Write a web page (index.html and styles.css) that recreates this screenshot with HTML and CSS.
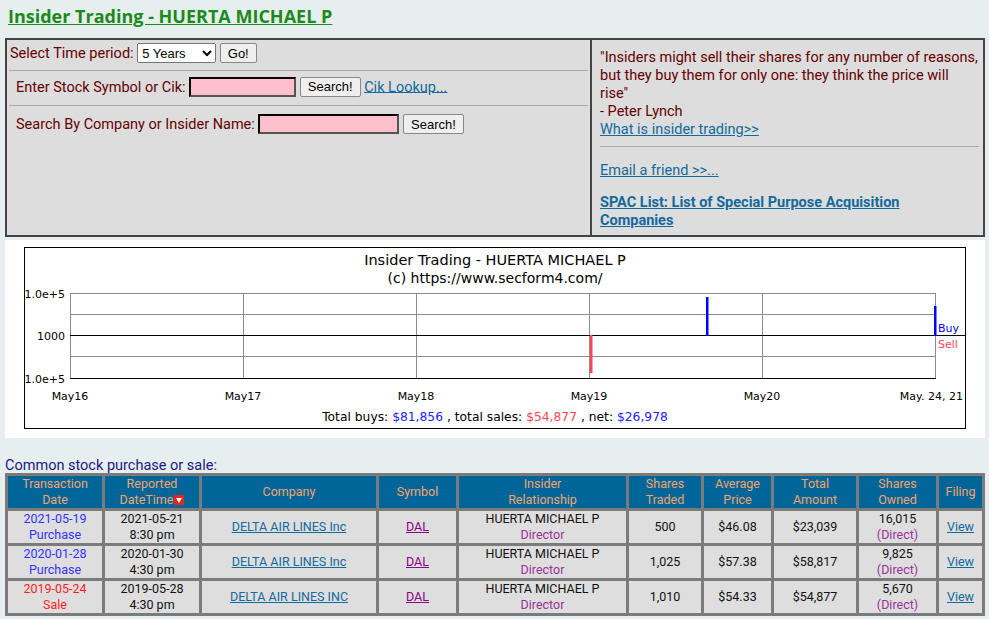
FILE: index.html
```html
<!DOCTYPE html>
<html lang="en">
<head>
    <meta charset="UTF-8">
    <title>Insider Trading - HUERTA MICHAEL P</title>
    <link rel="stylesheet" href="styles.css">
</head>
<body>

    <h1><a href="#" class="title-link">Insider Trading - HUERTA MICHAEL P</a></h1>

    <table class="top-panel">
        <tr>
            <td class="search-cell">
                <form class="search-row first">
                    Select Time period:
                    <select>
                        <option>5 Years</option>
                        <option>1 Year</option>
                        <option>All</option>
                    </select>
                    <button type="button">Go!</button>
                </form>
                <hr>
                <form class="search-row">
                    Enter Stock Symbol or Cik:
                    <input type="text" class="pink-input short">
                    <button type="button">Search!</button>
                    <a href="#">Cik Lookup...</a>
                </form>
                <hr>
                <form class="search-row third">
                    Search By Company or Insider Name:
                    <input type="text" class="pink-input long">
                    <button type="button">Search!</button>
                </form>
            </td>
            <td class="quote-cell">
                <div class="quote">"Insiders might sell their shares for any number of reasons, but they buy them for only one: they think the price will<br>rise"<br>- Peter Lynch</div>
                <a href="#">What is insider trading&gt;&gt;</a>
                <hr>
                <p><a href="#">Email a friend &gt;&gt;...</a></p>
                <p class="spac-line"><a href="#" class="spac">SPAC List: List of Special Purpose Acquisition Companies</a></p>
            </td>
        </tr>
    </table>

    <div class="chart-box">
        <svg class="chart" width="942" height="182" viewBox="0 0 942 182">
            <rect x="0.5" y="0.5" width="941" height="181" fill="#fff" stroke="#000"/>
            <text x="471" y="18" class="c-title">Insider Trading - HUERTA MICHAEL P</text>
            <text x="471" y="36" class="c-sub">(c) https://www.secform4.com/</text>

            <!-- grid -->
            <g stroke="#8c8c8c" stroke-width="1">
                <line x1="46" y1="46.5" x2="911" y2="46.5"/>
                <line x1="46" y1="67.5" x2="911" y2="67.5"/>
                <line x1="46" y1="109.5" x2="911" y2="109.5"/>
                <line x1="46.5" y1="46" x2="46.5" y2="131"/>
                <line x1="219.5" y1="46" x2="219.5" y2="131"/>
                <line x1="392.5" y1="46" x2="392.5" y2="131"/>
                <line x1="565.5" y1="46" x2="565.5" y2="131"/>
                <line x1="738.5" y1="46" x2="738.5" y2="131"/>
                <line x1="911.5" y1="46" x2="911.5" y2="131"/>
            </g>
            <line x1="46" y1="88.5" x2="941" y2="88.5" stroke="#000"/>
            <line x1="46" y1="131.5" x2="912" y2="131.5" stroke="#000"/>

            <!-- bars -->
            <rect x="682" y="50" width="2.5" height="39" fill="#0000ff"/>
            <rect x="910" y="59" width="2.5" height="30" fill="#0000ff"/>
            <rect x="566" y="88" width="2.5" height="38" fill="#ff4455"/>

            <g class="c-axis">
                <text x="41" y="51" text-anchor="end">1.0e+5</text>
                <text x="41" y="93" text-anchor="end">1000</text>
                <text x="41" y="136" text-anchor="end">1.0e+5</text>
                <text x="46" y="153" text-anchor="middle">May16</text>
                <text x="219" y="153" text-anchor="middle">May17</text>
                <text x="392" y="153" text-anchor="middle">May18</text>
                <text x="565" y="153" text-anchor="middle">May19</text>
                <text x="738" y="153" text-anchor="middle">May20</text>
                <text x="939" y="153" text-anchor="end">May. 24, 21</text>
            </g>
            <text x="914" y="85" class="c-legend" fill="#0000ff">Buy</text>
            <text x="914" y="101" class="c-legend" fill="#ff4455">Sell</text>

            <text x="471" y="174" class="c-foot">Total buys: <tspan fill="#2222ff">$81,856</tspan> , total sales: <tspan fill="#ff4455">$54,877</tspan> , net: <tspan fill="#2222ff">$26,978</tspan></text>
        </svg>
    </div>

    <div class="table-caption">Common stock purchase or sale:</div>
    <table class="trades">
        <colgroup>
            <col class="w-date">
            <col class="w-rep">
            <col class="w-co">
            <col class="w-sym">
            <col class="w-rel">
            <col class="w-sh">
            <col class="w-avg">
            <col class="w-tot">
            <col class="w-own">
            <col>
        </colgroup>
        <thead>
            <tr>
                <th>Transaction<br>Date</th>
                <th>Reported<br>DateTime<svg class="sort" width="10" height="10" viewBox="0 0 10 10"><rect width="10" height="10" fill="#e8251b"/><path d="M2 3 L8 3 L5 8 Z" fill="#fff"/></svg></th>
                <th>Company</th>
                <th>Symbol</th>
                <th>Insider<br>Relationship</th>
                <th>Shares<br>Traded</th>
                <th>Average<br>Price</th>
                <th>Total<br>Amount</th>
                <th>Shares<br>Owned</th>
                <th>Filing</th>
            </tr>
        </thead>
        <tbody>
            <tr>
                <td class="buy">2021-05-19<br>Purchase</td>
                <td>2021-05-21<br>8:30 pm</td>
                <td><a href="#">DELTA AIR LINES Inc</a></td>
                <td><a href="#" class="sym">DAL</a></td>
                <td>HUERTA MICHAEL P<br><span class="role">Director</span></td>
                <td>500</td>
                <td>$46.08</td>
                <td>$23,039</td>
                <td>16,015<br><span class="direct">(Direct)</span></td>
                <td><a href="#">View</a></td>
            </tr>
            <tr>
                <td class="buy">2020-01-28<br>Purchase</td>
                <td>2020-01-30<br>4:30 pm</td>
                <td><a href="#">DELTA AIR LINES Inc</a></td>
                <td><a href="#" class="sym">DAL</a></td>
                <td>HUERTA MICHAEL P<br><span class="role">Director</span></td>
                <td>1,025</td>
                <td>$57.38</td>
                <td>$58,817</td>
                <td>9,825<br><span class="direct">(Direct)</span></td>
                <td><a href="#">View</a></td>
            </tr>
            <tr>
                <td class="sale">2019-05-24<br>Sale</td>
                <td>2019-05-28<br>4:30 pm</td>
                <td><a href="#">DELTA AIR LINES INC</a></td>
                <td><a href="#" class="sym">DAL</a></td>
                <td>HUERTA MICHAEL P<br><span class="role">Director</span></td>
                <td>1,010</td>
                <td>$54.33</td>
                <td>$54,877</td>
                <td>5,670<br><span class="direct">(Direct)</span></td>
                <td><a href="#">View</a></td>
            </tr>
        </tbody>
    </table>

</body>
</html>
```

FILE: styles.css
```css
/* page */
body {
    margin: 0 4px 0 5px;
    background: #e6eef0;
    font-family: Roboto, "Open Sans", sans-serif;
    font-size: 14.5px;
    color: #660000;
}
a {
    color: #136a9c;
}
h1 {
    margin: 0;
    padding: 4px 3px 0;
    height: 34px;
    font-family: "Open Sans", sans-serif;
    font-size: 18px;
    line-height: 24px;
}
.title-link {
    color: #1a8a1a;
}
/* top search + quote panel */
.top-panel {
    width: 980px;
    height: 199px;
    border-collapse: collapse;
    border: 2px solid #444;
    background: #dddddd;
}
.top-panel td {
    vertical-align: top;
    border: 2px solid #444;
    padding: 0;
}
.top-panel hr {
    border: none;
    border-top: 1px solid #aaa;
    margin: 0 2px;
}
.search-cell {
    width: 583px;
}
.search-row {
    margin: 0;
    padding: 6px 0 8px 9px;
    line-height: 20px;
}
.search-row.first {
    padding: 3px 0 6px 3px;
}
.search-row.third {
    padding-top: 8px;
}
select {
    font-family: Arial, "Liberation Sans", sans-serif;
    font-size: 13px;
    height: 20px;
    width: 79px;
}
button {
    font-family: Arial, "Liberation Sans", sans-serif;
    font-size: 13px;
    height: 20px;
    padding: 0 7px;
    background: #efefef;
    border: 1px solid #888;
    border-radius: 2px;
    color: #000;
}
.pink-input {
    background: pink;
    border: 2px inset #555;
    height: 16px;
    padding: 0 2px;
}
.pink-input.short {
    width: 99px;
}
.pink-input.long {
    width: 133px;
}
.quote-cell {
    padding: 9px 4px 0 8px !important;
    line-height: 18px;
}
.quote-cell hr {
    margin: 7px 0 15px;
}
.quote-cell p {
    margin: 0 0 14px;
}
.quote-cell .spac-line {
    width: 320px;
    margin-bottom: 0;
}
.spac {
    font-weight: bold;
}
/* chart */
.chart-box {
    background: #fff;
    margin-top: 3px;
    width: 980px;
    padding: 7px 0 9px;
}
.chart {
    display: block;
    margin: 0 auto;
    font-family: "DejaVu Sans", sans-serif;
}
.c-title {
    font-size: 14.5px;
    text-anchor: middle;
}
.c-sub {
    font-size: 14px;
    text-anchor: middle;
}
.c-axis {
    font-size: 11px;
}
.c-legend {
    font-size: 11px;
}
.c-foot {
    font-size: 12.3px;
    text-anchor: middle;
}
/* trades table */
.table-caption {
    margin-top: 20px;
    color: #1a1a80;
    line-height: 15px;
}
.trades {
    width: 980px;
    table-layout: fixed;
    border-collapse: collapse;
    border: 3px solid #7b7b7b;
    font-size: 12.5px;
    line-height: 16px;
    text-align: center;
    color: #111;
}
.trades th,
.trades td {
    border: 3px solid #7b7b7b;
    padding: 0;
}
.trades th {
    background: #006699;
    color: #f2a46c;
    font-weight: normal;
    height: 31px;
}
.trades td {
    background: #dedede;
    height: 31px;
}
.sort {
    vertical-align: -1px;
    margin-left: 1px;
}
.w-date { width: 97px; }
.w-rep { width: 97px; }
.w-co { width: 177px; }
.w-sym { width: 80px; }
.w-rel { width: 170px; }
.w-sh { width: 75px; }
.w-avg { width: 70px; }
.w-tot { width: 85px; }
.w-own { width: 80px; }
.buy {
    color: #3333ff;
}
.sale {
    color: #ff2222;
}
.role,
.direct {
    color: #993399;
}
.sym {
    color: #880088;
}
```
